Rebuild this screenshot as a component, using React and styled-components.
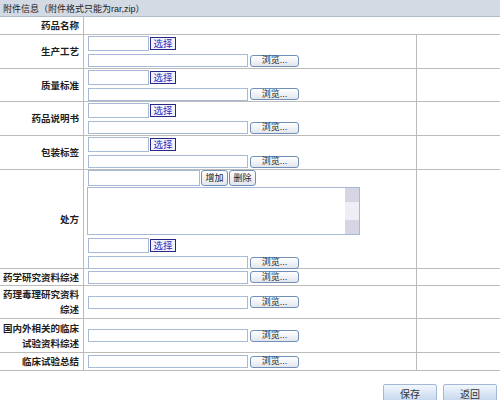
import React from 'react';
import styled, { createGlobalStyle } from 'styled-components';

const GlobalStyle = createGlobalStyle`
    body {
        margin: 0;
        background: #ffffff;
        font-family: "Liberation Sans", "Noto Sans CJK SC", sans-serif;
        color: #222222;
    }
`;

const Page = styled.div`
    width: 500px;
    height: 400px;
    overflow: hidden;
`;

const TitleBar = styled.div`
    box-sizing: border-box;
    height: 17px;
    padding-left: 3px;
    display: flex;
    align-items: center;
    background: #d4dae4;
    border-bottom: 1px solid #b3bbc7;
    font-size: 9px;
    color: #1c1c1c;
`;

const Row = styled.div`
    box-sizing: border-box;
    display: grid;
    grid-template-columns: ${props => props.$wide ? '84px 1fr' : '84px 333px 1fr'};
    height: ${props => props.$h}px;
    border-bottom: 1px solid #bcbcbc;
`;

const Label = styled.div`
    box-sizing: border-box;
    display: grid;
    align-content: center;
    justify-items: end;
    padding: 0 4px 0 0;
    border-right: 1px solid #bcbcbc;
    font-family: "Noto Sans CJK SC", sans-serif;
    font-size: 9.5px;
    font-weight: bold;
    line-height: 15px;
    text-align: right;
    color: #1e1e1e;
`;

const LabelLine = styled.div`
    white-space: nowrap;
`;

const Field = styled.div`
    box-sizing: border-box;
    display: flex;
    flex-direction: column;
    justify-content: center;
    gap: ${props => props.$gap ?? 3}px;
    padding-left: 4px;
    border-right: ${props => props.$last ? 'none' : '1px solid #bcbcbc'};
`;

const Side = styled.div``;

const Line = styled.div`
    display: flex;
    align-items: center;
    gap: ${props => props.$gap ?? 1}px;
`;

const TextBox = styled.input`
    box-sizing: border-box;
    width: ${props => props.$w}px;
    height: ${props => props.$h}px;
    margin: 0;
    padding: 0 2px;
    border: 1px solid #a6bad6;
    background: #ffffff;
    font-size: 9px;
`;

const PickButton = styled.button`
    box-sizing: border-box;
    width: 26px;
    height: 13px;
    margin: 0;
    padding: 0;
    border: 1px solid #27278a;
    background: #f3f3fb;
    color: #2b2bc0;
    font-family: inherit;
    font-size: 9.5px;
    line-height: 11px;
`;

const SoftButton = styled.button`
    box-sizing: border-box;
    width: ${props => props.$w}px;
    height: ${props => props.$h}px;
    margin: 0;
    padding: 0;
    border: 1px solid #7090b8;
    border-radius: 3px;
    background: linear-gradient(#ffffff, #e2e6ec);
    color: #222222;
    font-family: inherit;
    font-size: 9px;
    line-height: 1;
`;

const NotesBox = styled.div`
    box-sizing: border-box;
    display: flex;
    width: 273px;
    height: 48px;
    margin: 1px 0 3px -1px;
    border: 1px solid #a6bad6;
    background: #ffffff;
`;

const Notes = styled.textarea`
    flex: 1;
    margin: 0;
    padding: 0;
    border: none;
    outline: none;
    resize: none;
`;

const ScrollRail = styled.div`
    display: flex;
    flex-direction: column;
    width: 14px;
    background: #eeeef6;
`;

const ScrollArrow = styled.div`
    height: 14px;
    background: #d5d5e4;
`;

const ScrollTrack = styled.div`
    flex: 1;
`;

const Spacer = styled.div`
    height: ${props => props.$h}px;
`;

const Actions = styled.div`
    display: flex;
    justify-content: flex-end;
    gap: 6px;
    padding: 13px 3px 0 0;
`;

const ActionButton = styled.button`
    box-sizing: border-box;
    width: 54px;
    height: 18px;
    margin: 0;
    padding: 0;
    border: 1px solid #a2b8d6;
    border-radius: 2px;
    background: linear-gradient(#f2f7fd, #c6d7ee);
    color: #333333;
    font-family: inherit;
    font-size: 10px;
`;

function FileLine() {
    return (
        <Line $gap={2}>
            <TextBox $w={160} $h={13} readOnly />
            <SoftButton $w={49} $h={12}>浏览...</SoftButton>
        </Line>
    );
}

function PickLine() {
    return (
        <Line>
            <TextBox $w={61} $h={15} />
            <PickButton>选择</PickButton>
        </Line>
    );
}

function RowLabel({ parts }) {
    return (
        <Label>
            {parts.map(part => <LabelLine key={part}>{part}</LabelLine>)}
        </Label>
    );
}

const pickRows = [
    { label: '生产工艺', h: 34 },
    { label: '质量标准', h: 33 },
    { label: '药品说明书', h: 34 },
    { label: '包装标签', h: 34 },
];

const fileRows = [
    { label: ['药学研究资料综述'], h: 17 },
    { label: ['药理毒理研究资料', '综述'], h: 33 },
    { label: ['国内外相关的临床', '试验资料综述'], h: 34 },
    { label: ['临床试验总结'], h: 18 },
];

export default function App() {
    return (
        <Page>
            <GlobalStyle />
            <TitleBar>附件信息（附件格式只能为rar,zip）</TitleBar>

            <Row $wide $h={18}>
                <RowLabel parts={['药品名称']} />
                <Field $last />
            </Row>

            {pickRows.map(row => (
                <Row key={row.label} $h={row.h}>
                    <RowLabel parts={[row.label]} />
                    <Field>
                        <PickLine />
                        <FileLine />
                    </Field>
                    <Side />
                </Row>
            ))}

            <Row $h={99}>
                <RowLabel parts={['处方']} />
                <Field $gap={0}>
                    <Line>
                        <TextBox $w={112} $h={16} />
                        <SoftButton $w={27} $h={16}>增加</SoftButton>
                        <SoftButton $w={27} $h={16}>删除</SoftButton>
                    </Line>
                    <NotesBox>
                        <Notes />
                        <ScrollRail>
                            <ScrollArrow />
                            <ScrollTrack />
                            <ScrollArrow />
                        </ScrollRail>
                    </NotesBox>
                    <PickLine />
                    <Spacer $h={3} />
                    <FileLine />
                </Field>
                <Side />
            </Row>

            {fileRows.map(row => (
                <Row key={row.label.join('')} $h={row.h}>
                    <RowLabel parts={row.label} />
                    <Field>
                        <FileLine />
                    </Field>
                    <Side />
                </Row>
            ))}

            <Actions>
                <ActionButton>保存</ActionButton>
                <ActionButton>返回</ActionButton>
            </Actions>
        </Page>
    );
}
